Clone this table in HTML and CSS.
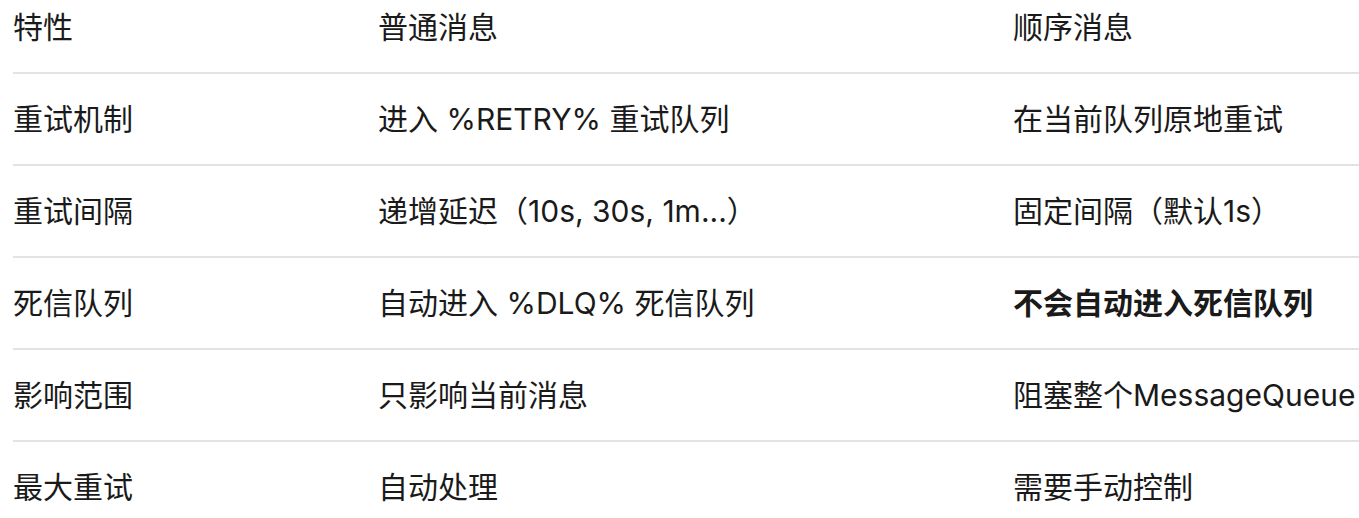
FILE: index.html
```html
<!DOCTYPE html>
<html lang="zh">
<head>
<meta charset="utf-8">
<title>普通消息与顺序消息对比</title>
<link rel="stylesheet" href="styles.css">
</head>
<body>
<table class="compare">
  <colgroup>
    <col class="c1"><col class="c2"><col class="c3">
  </colgroup>
  <thead>
    <tr><th>特性</th><th>普通消息</th><th>顺序消息</th></tr>
  </thead>
  <tbody>
    <tr><td>重试机制</td><td>进入 %RETRY% 重试队列</td><td>在当前队列原地重试</td></tr>
    <tr><td>重试间隔</td><td>递增延迟（10s, 30s, 1m...）</td><td>固定间隔（默认1s）</td></tr>
    <tr><td>死信队列</td><td>自动进入 %DLQ% 死信队列</td><td><strong>不会自动进入死信队列</strong></td></tr>
    <tr><td>影响范围</td><td>只影响当前消息</td><td>阻塞整个MessageQueue</td></tr>
    <tr><td>最大重试</td><td>自动处理</td><td>需要手动控制</td></tr>
  </tbody>
</table>
</body>
</html>
```
FILE: styles.css
```css
html, body {
  margin: 0;
  padding: 0;
  background: #ffffff;
}
body {
  font-family: "Inter", "Noto Sans CJK SC", sans-serif;
  font-size: 30px;
  line-height: 32px;
  color: #1a1a1a;
}
.compare {
  margin-left: 13px;
  width: 1346px;
  border-collapse: collapse;
  table-layout: fixed;
}
.c1 { width: 365px; }
.c2 { width: 635px; }
.c3 { width: 346px; }
.compare th,
.compare td {
  text-align: left;
  font-weight: 400;
  padding: 29px 0 29px;
  white-space: nowrap;
  vertical-align: middle;
}
.compare th {
  padding-top: 11px;
}
.compare tr {
  border-bottom: 2px solid #e3e3e3;
}
.compare tbody tr:last-child {
  border-bottom: none;
}
.compare strong {
  font-weight: 700;
}
```
